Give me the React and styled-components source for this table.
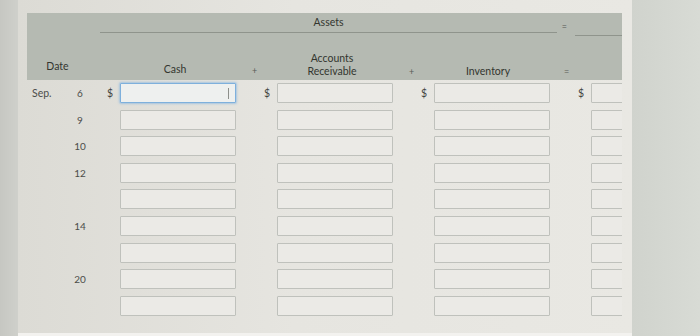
import React from "react";
import styled, { createGlobalStyle } from "styled-components";

const GlobalStyle = createGlobalStyle`
  html, body {
    margin: 0;
    padding: 0;
    background: #d9dad4;
  }
  * {
    box-sizing: border-box;
  }
`;

// month | day | then ($ | field | operator) per account
const COLUMNS = "35px 34px 24px 116px 17px 24px 116px 17px 24px 116px 17px 24px 116px";

const Screen = styled.div`
  display: flex;
  width: 700px;
  height: 336px;
  font-family: Lato, "Open Sans", sans-serif;
  overflow: hidden;
`;

const Bezel = styled.div`
  width: 18px;
  background: linear-gradient(to right, #c6c7c2, #cfd0cb);
`;

const Page = styled.div`
  flex: 1;
  display: flex;
  flex-direction: column;
  background: linear-gradient(to right, #dcdbd5, #e6e5e0 45%, #e9e8e3);
`;

const Content = styled.div`
  flex: 1;
  padding: 13px 10px 0 9px;
`;

const Footer = styled.div`
  height: 3px;
  background: #f3f2ef;
`;

const SidePanel = styled.div`
  width: 68px;
  background: linear-gradient(to right, #d0d3cd, #d8dbd5);
`;

const Sheet = styled.div`
  width: 595px;
  overflow: hidden;
`;

const Header = styled.div`
  display: grid;
  grid-template-columns: ${COLUMNS};
  grid-template-rows: 18px 1fr;
  height: 67px;
  padding: 2px 0 2px;
  background: #b5bab2;
  color: #33362f;
  font-size: 10.5px;
`;

const Caption = styled.div`
  grid-column: ${(p) => p.$col};
  grid-row: ${(p) => p.$row || 2};
  align-self: end;
  text-align: center;
  line-height: 13px;
  margin-left: ${(p) => p.$shift || 0}px;
  margin-bottom: ${(p) => p.$drop || 0}px;
`;

const Group = styled.div`
  grid-column: 3 / 11;
  grid-row: 1;
  margin: 0 -7px 0 4px;
  border-bottom: 1px solid #8f948c;
  text-align: center;
  line-height: 15px;
`;

const Equals = styled.div`
  grid-column: 11 / 12;
  grid-row: 1;
  align-self: end;
  text-align: right;
  font-size: 9px;
  line-height: 12px;
  color: #545852;
`;

const Rule = styled.div`
  grid-column: 12 / -1;
  grid-row: 1;
  margin-left: 8px;
  border-bottom: 1px solid #8f948c;
  transform: translateY(3px);
`;

const Op = styled(Caption)`
  font-size: 9px;
  color: #595d57;
`;

const Body = styled.div`
  display: grid;
  grid-template-columns: ${COLUMNS};
  grid-auto-rows: 20px;
  row-gap: 6.6px;
  padding-top: 3px;
  color: #4c4d4a;
  font-size: 10.5px;
`;

const Month = styled.div`
  grid-column: 1;
  align-self: center;
  padding-left: 5px;
`;

const Day = styled.div`
  grid-column: 2;
  align-self: center;
  text-align: center;
  font-size: 10px;
  padding-left: 2px;
`;

const Dollar = styled.div`
  grid-column: ${(p) => p.$col};
  align-self: center;
  text-align: right;
  padding-right: 7px;
  font-size: 10.5px;
  color: #434441;
`;

const Field = styled.div`
  grid-column: ${(p) => p.$col};
  position: relative;
  &::after {
    content: "";
    display: ${(p) => (p.$focused ? "block" : "none")};
    position: absolute;
    right: 7px;
    top: 5px;
    width: 1px;
    height: 11px;
    background: #8d8f8b;
  }
`;

const Input = styled.input`
  display: block;
  width: 100%;
  height: 100%;
  margin: 0;
  padding: 0 6px;
  border: 1px solid ${(p) => (p.$focused ? "#7eb0dc" : "#bfc1bc")};
  border-radius: 1px;
  background: ${(p) => (p.$focused ? "#eef0ef" : "#ebeae6")};
  box-shadow: ${(p) => (p.$focused ? "0 0 2px 1px rgba(120, 175, 225, 0.55)" : "none")};
  outline: none;
  font: inherit;
  text-align: right;
`;

const rows = [
  { month: "Sep.", day: "6", dollars: true },
  { day: "9" },
  { day: "10" },
  { day: "12" },
  {},
  { day: "14" },
  {},
  { day: "20" },
  {},
];

const fieldCols = [4, 7, 10, 13];

function App() {
  return (
    <>
      <GlobalStyle />
      <Screen>
        <Bezel />
        <Page>
          <Content>
            <Sheet>
              <Header>
                <Group>Assets</Group>
                <Equals>=</Equals>
                <Rule />
                <Caption $col="1 / 3" $shift={-8} $drop={5}>Date</Caption>
                <Caption $col="4" $shift={-6} $drop={2}>Cash</Caption>
                <Op $col="5 / 7" $shift={-4} $drop={1}>+</Op>
                <Caption $col="7" $shift={-6}>Accounts<br />Receivable</Caption>
                <Op $col="8 / 10" $shift={-4}>+</Op>
                <Caption $col="10" $shift={-8}>Inventory</Caption>
                <Op $col="11 / 13" $shift={-8}>=</Op>
              </Header>
              <Body>
                {rows.map((row, i) => (
                  <React.Fragment key={i}>
                    <Month style={{ gridRow: i + 1 }}>{row.month}</Month>
                    <Day style={{ gridRow: i + 1 }}>{row.day}</Day>
                    {fieldCols.map((col) => (
                      <React.Fragment key={col}>
                        {row.dollars && (
                          <Dollar $col={col - 1} style={{ gridRow: i + 1 }}>$</Dollar>
                        )}
                        <Field
                          $col={col}
                          $focused={i === 0 && col === 4}
                          style={{ gridRow: i + 1 }}
                        >
                          <Input readOnly $focused={i === 0 && col === 4} />
                        </Field>
                      </React.Fragment>
                    ))}
                  </React.Fragment>
                ))}
              </Body>
            </Sheet>
          </Content>
          <Footer />
        </Page>
        <SidePanel />
      </Screen>
    </>
  );
}

export default App;
